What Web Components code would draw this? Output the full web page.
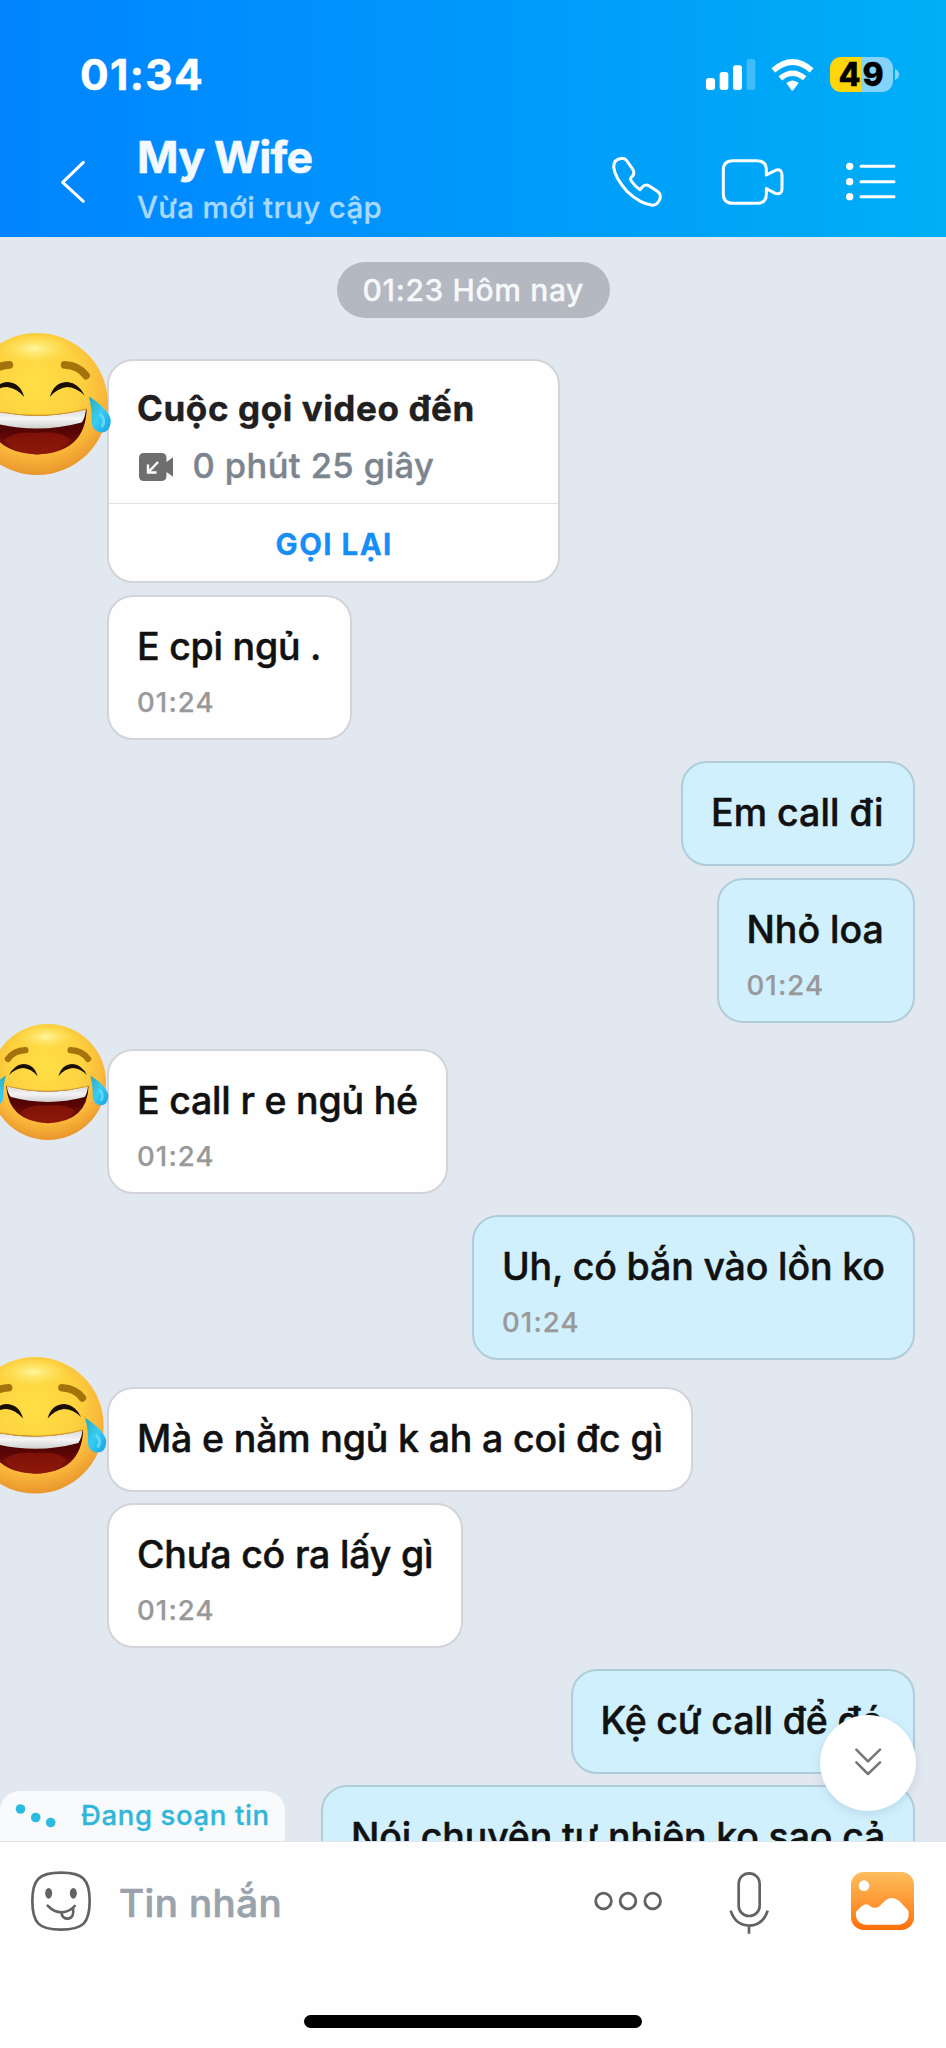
<!DOCTYPE html>
<html lang="vi">
<head>
<meta charset="utf-8">
<title>My Wife</title>
<style>
html,body{margin:0;padding:0}
body{font-family:Inter,"Noto Sans",sans-serif;background:#fff;width:946px;height:2048px;overflow:hidden}
</style>
</head>
<body>
<chat-app></chat-app>
<script>
const define = (name, html, setup) => customElements.define(name, class extends HTMLElement {
  connectedCallback() {
    if (this.shadowRoot) return;
    const t = document.createElement('template');
    t.innerHTML = html;
    this.attachShadow({ mode: 'open' }).append(t.content.cloneNode(true));
    if (setup) setup(this, this.shadowRoot);
  }
});

/* A single line of text whose tracking is set so that its glyphs span `w` pixels. */
const ctx = document.createElement('canvas').getContext('2d');
define('fit-text', `<style>:host{display:block;white-space:nowrap}span{display:inline-block}</style><span><slot></slot></span>`, (host, root) => {
  const cs = getComputedStyle(host), text = host.textContent.trim(), w = +host.getAttribute('w');
  ctx.font = `${cs.fontWeight} ${cs.fontSize} Inter, "Noto Sans", sans-serif`;
  const m = ctx.measureText(text);
  const ls = (w - m.actualBoundingBoxRight - m.actualBoundingBoxLeft) / ([...text].length - 1);
  const s = root.querySelector('span');
  s.style.letterSpacing = ls.toFixed(3) + 'px';
  s.style.marginRight = (-ls).toFixed(3) + 'px';
});

define('status-bar', `<style>
:host{display:flex;height:81px;padding:50px 47.500px 0 80px;color:#fff;align-items:flex-start}
.time{font:700 42.500px/50px Inter,sans-serif;flex:1;-webkit-text-stroke:.5px}
svg{display:block}
.sig{margin:9px 15.5px 0 0}.wifi{margin:9px 15.5px 0 0}
.bat{margin-top:7px;width:63px;height:35px;border-radius:11px;background:linear-gradient(90deg,#ffd60a 31px,#84d3fb 31px);color:#000;display:flex;justify-content:center;font:800 32px/36px Inter,sans-serif;-webkit-text-stroke:.4px}
.nub{margin:19px 0 0 2px}
</style>
<fit-text class="time" w="120">01:34</fit-text>
<svg class="sig" width="50" height="31" viewBox="699 177 150 93" fill="#fff"><rect x="699" y="234" width="27" height="36" rx="8"/><rect x="740" y="216" width="26" height="54" rx="8"/><rect x="780" y="196" width="27" height="74" rx="8"/><rect x="821" y="177" width="26" height="93" rx="8" opacity=".25"/></svg>
<svg class="wifi" width="43" height="32" viewBox="894 176 129 96" fill="none" stroke="#fff"><path d="M901 210Q959 160 1016 210" stroke-width="17"/><path d="M922 234Q959 203 995 234" stroke-width="16"/><path d="M940 248Q959 233 977 248L961 269Q958 272 955 269Z" fill="#fff" stroke="none"/></svg>
<div class="bat"><fit-text w="43">49</fit-text></div>
<svg class="nub" width="4" height="11" viewBox="0 0 4 11"><path d="M0 0Q4 1.500 4 5.500Q4 9.500 0 11Z" fill="#84d3fb"/></svg>`);

define('chat-header', `<style>
:host{display:block;height:237px;background:linear-gradient(90deg,#0084ff 0,#0096fc 45%,#00aff5 100%)}
.row{display:flex;align-items:flex-start;height:106px}
svg{display:block;fill:none;stroke:#fff;stroke-width:9;stroke-linecap:round;stroke-linejoin:round}
.back{margin:28px 0 0 59px}
.who{margin-left:50px;flex:1}
.name{font:700 44.500px/52px Inter,sans-serif;color:#f3f9ff;-webkit-text-stroke:.6px}
.sub{font:500 29.5px/36px Inter,sans-serif;color:#a8d9ff;margin-top:6px;-webkit-text-stroke:.3px}
</style>
<status-bar></status-bar>
<div class="row">
<svg class="back" width="28" height="46" viewBox="177 477 84 138"><path d="M250 487L188 547L250 604"/></svg>
<div class="who"><fit-text class="name" w="172.500">My Wife</fit-text><fit-text class="sub" w="243.500">Vừa mới truy cập</fit-text></div>
<svg style="margin:24px 56px 0 0" width="54" height="54" viewBox="410 463 162 162"><path d="M447 473Q455 473 460 480L479 507Q485 517 478 526Q468 533 474 541Q485 557 500 567L507 559Q516 549 528 556L551 571Q566 581 559 597Q551 614 538 614Q501 610 462 573Q424 530 421 499Q421 475 447 473Z"/></svg>
<svg style="margin:24.500px 57.500px 0 0" width="66" height="52" viewBox="742 466 198 156"><path d="M781 480H852Q881 480 881 508V523L908 509Q928 503 928 523V564Q928 583 908 578L881 564V580Q881 608 852 608H781Q752 608 752 580V508Q752 480 781 480Z"/></svg>
<svg style="margin:28px 48.500px 0 0" width="54" height="46" viewBox="1112 477 162 138"><path d="M1163 499H1262M1163 545H1262M1163 590H1262"/><g fill="#fff" stroke="none"><circle cx="1129" cy="499" r="11"/><circle cx="1129" cy="545" r="11"/><circle cx="1129" cy="590" r="11"/></g></svg>
</div>`);

define('chat-bubble', `<style>
:host{display:block;box-sizing:border-box;border:2px solid #d2d4d9;border-radius:26px;background:#fefefe;color:#111;padding:27px 28px 0;height:105px;align-self:flex-start;margin-left:107px;flex:none}
:host([time]){height:144.500px}
:host([me]){background:#d0f0fd;border-color:#b1ccd9;align-self:flex-end;margin:0 31px 0 0}
::slotted(fit-text){font:500 37.5px/46px Inter,sans-serif;-webkit-text-stroke:.5px}
.time{font:500 27.500px/33px Inter,sans-serif;color:#999;margin-top:15.500px;-webkit-text-stroke:.25px}
</style><slot></slot>`, (host, root) => {
  const t = host.getAttribute('time');
  if (t) {
    const e = document.createElement('fit-text');
    e.className = 'time'; e.setAttribute('w', '74.500'); e.textContent = t;
    root.append(e);
  }
});

define('call-card', `<style>
:host{display:block;box-sizing:border-box;width:453px;height:224px;margin-left:107px;border:2px solid #d2d4d9;border-radius:26px;background:#fefefe;flex:none}
.top{box-sizing:border-box;height:143px;padding:25px 28px 0;border-bottom:1.500px solid #dfe2e5}
.t{font:700 35px/44px Inter,sans-serif;color:#202020;-webkit-text-stroke:.4px}
.d{display:flex;align-items:center;gap:18px;margin-top:14px}
.s{font:500 34.5px/44px Inter,sans-serif;color:#7c858e;-webkit-text-stroke:.4px}
.b{display:flex;justify-content:center;padding-top:21.500px;font:700 29.500px/36px Inter,sans-serif;color:#178ef6;-webkit-text-stroke:.3px}
svg{display:block;margin-left:1.500px;margin-top:1px}
</style>
<div class="top"><fit-text class="t" w="334.500">Cuộc gọi video đến</fit-text>
<div class="d"><svg width="36" height="28" viewBox="0 0 36 28"><path d="M5 0H22Q27.500 0 27.500 5V9L34 4.300V23.700L27.500 19V23Q27.500 28 22 28H5Q0 28 0 23V5Q0 0 5 0Z" fill="#6e6e6e"/><path d="M19 9L9.500 19M9 11.500V19.500H17.500" fill="none" stroke="#fff" stroke-width="2.400"/></svg><fit-text class="s" w="240.500">0 phút 25 giây</fit-text></div></div>
<div class="b"><fit-text w="113.500">GỌI LẠI</fit-text></div>`);

let uid = 0;
define('joy-face', '<style>:host{display:block;position:absolute}svg{display:block;width:100%;height:100%;overflow:visible}</style>', (host, root) => {
  const r = +host.getAttribute('r'), id = 'j' + uid++;
  host.style.cssText += `;left:${host.getAttribute('cx') - r}px;top:${host.getAttribute('cy') - r}px;width:${2*r}px;height:${2*r}px`;
  const half = `<path d="M39-55Q59-54 69-40" fill="none" stroke="#a5730c" stroke-width="11" stroke-linecap="round"/>
  <path d="M18-10Q24-31 43-31Q59-29 67-12Q55-24 42-24Q28-22 18-10Z" fill="#180e04"/>`;
  const tear = `<path d="M73-11Q103 9 104 24Q103 40 91 40Q78 39 77 26Q78 9 73-11Z" fill="url(#${id}t)"/><path d="M90 15Q97 23 92 31" fill="none" stroke="#7be4fb" stroke-width="4" stroke-linecap="round" opacity=".7"/>`;
  const t = document.createElement('template');
  t.innerHTML = `<svg viewBox="-100 -100 200 200"><defs>
  <radialGradient id="${id}f" cx=".48" cy=".36" r=".68"><stop offset="0" stop-color="#ffdf45"/><stop offset=".48" stop-color="#fdd23f"/><stop offset=".74" stop-color="#f9b73a"/><stop offset="1" stop-color="#e58c28"/></radialGradient>
  <radialGradient id="${id}h"><stop offset="0" stop-color="#fff7a0"/><stop offset="1" stop-color="#ffe45a" stop-opacity="0"/></radialGradient>
  <linearGradient id="${id}m" x2="0" y2="1"><stop offset="0" stop-color="#350000"/><stop offset=".55" stop-color="#5c0505"/><stop offset="1" stop-color="#8d1a08"/></linearGradient>
  <linearGradient id="${id}w" x2="0" y2="1"><stop offset="0" stop-color="#d8d8d8"/><stop offset=".5" stop-color="#f4f4f4"/><stop offset="1" stop-color="#cfcfcf"/></linearGradient>
  <linearGradient id="${id}t" x2="1" y2="1"><stop offset="0" stop-color="#2aa8b4"/><stop offset=".5" stop-color="#38cdf3"/><stop offset="1" stop-color="#179fdf"/></linearGradient></defs>
  <circle r="100" fill="url(#${id}f)"/><ellipse cx="-3" cy="-78" rx="52" ry="21" fill="url(#${id}h)"/>
  <path d="M-72 7Q0 25 70 7Q68 69 0 71Q-68 69-72 7Z" fill="url(#${id}m)"/>
  <path d="M-47 52Q-32 37-2 41Q32 36 47 51Q28 70 0 71Q-30 69-47 52Z" fill="#8f180a" opacity=".7"/>
  <path d="M-71 7Q0 26 69 7Q68 19 63 26Q0 43-64 26Q-70 19-71 7Z" fill="url(#${id}w)"/>
  <path d="M-72 7Q0 25 70 7" fill="none" stroke="#d79a22" stroke-width="1.500"/>
  ${half}<g transform="scale(-1,1)">${half}${tear}</g>${tear}</svg>`;
  root.append(t.content);
});

define('scroll-down', `<style>
:host{position:absolute;left:820px;top:1478px;width:96px;height:96px;border-radius:50%;background:#fff;box-shadow:0 3px 10px rgba(60,90,120,.15);display:flex;align-items:center;justify-content:center}
svg{fill:none;stroke:#767676;stroke-width:7.500;stroke-linecap:round;stroke-linejoin:round}
</style><svg width="30" height="32" viewBox="1140 350 90 96"><path d="M1150 358L1185 393L1221 358M1150 396L1185 431L1221 396"/></svg>`);

define('typing-tag', `<style>
:host{position:absolute;left:0;top:1554px;width:285px;height:50px;border-radius:20px 20px 0 0;background:#f8fafc;display:flex;color:#31b6da}
svg{display:block}fit-text{font:500 27.5px/34px Inter,sans-serif;margin:7px 0 0 21px;-webkit-text-stroke:.3px}
</style><svg width="60" height="50" fill="#2cbbe0"><circle cx="20.500" cy="18" r="4.800"/><circle cx="35.700" cy="26.500" r="4.800"/><circle cx="50.700" cy="31.500" r="4.800"/></svg><fit-text w="186.500">Đang soạn tin</fit-text>`);

define('chat-thread', `<style>
:host{display:flex;flex-direction:column;position:relative;height:1604px;overflow:hidden;background:#e2e8f0}
.pill{align-self:center;box-sizing:border-box;width:273px;height:56px;margin:25px 0 41px;border-radius:28px;background:#b4b9c1;color:#f6f8fa;font:500 30px/56px Inter,sans-serif;display:flex;justify-content:center;flex:none;-webkit-text-stroke:.3px}
.g12{margin-top:12px!important}.g22{margin-top:21.500px!important}.g27{margin-top:27px!important}
</style>
<div class="pill"><fit-text w="219.500">01:23 Hôm nay</fit-text></div>
<call-card></call-card>
<chat-bubble class="g12" time="01:24" style="width:245px"><fit-text w="179">E cpi ngủ .</fit-text></chat-bubble>
<chat-bubble me class="g22" style="width:234px"><fit-text w="168">Em call đi</fit-text></chat-bubble>
<chat-bubble me class="g12" time="01:24" style="width:198.500px"><fit-text w="132">Nhỏ loa</fit-text></chat-bubble>
<chat-bubble time="01:24" style="width:341px;margin-top:26.500px"><fit-text w="277">E call r e ngủ hé</fit-text></chat-bubble>
<chat-bubble me class="g22" time="01:24" style="width:443px"><fit-text w="378.500">Uh, có bắn vào lồn ko</fit-text></chat-bubble>
<chat-bubble style="width:585.500px;height:104.500px;margin-top:27.500px"><fit-text w="520.500">Mà e nằm ngủ k ah a coi đc gì</fit-text></chat-bubble>
<chat-bubble time="01:24" style="width:356px;margin-top:11.500px"><fit-text w="292">Chưa có ra lấy gì</fit-text></chat-bubble>
<chat-bubble me class="g22" style="width:344.500px"><fit-text w="278">Kệ cứ call để đó</fit-text></chat-bubble>
<chat-bubble me class="g12" style="width:594px;margin-top:11px!important"><fit-text w="529">Nói chuyện tự nhiên ko sao cả</fit-text></chat-bubble>
<joy-face cx="37" cy="166.500" r="71"></joy-face>
<joy-face cx="48" cy="845" r="58"></joy-face>
<joy-face cx="35" cy="1188.300" r="68.300"></joy-face>
<typing-tag></typing-tag>
<scroll-down></scroll-down>`);

define('chat-composer', `<style>
:host{display:flex;flex-direction:column;box-sizing:border-box;height:207px;border-top:1px solid #e0e3e7;background:#fefefe}
.row{display:flex;height:173px;align-items:flex-start;flex:none}
.ph{font:500 38.5px/46px Inter,sans-serif;color:#9aa2ab;margin:38px 0 0 26.500px;flex:1;-webkit-text-stroke:.7px}
svg{display:block;fill:none;stroke:#626262;stroke-width:8;stroke-linecap:round;stroke-linejoin:round}
.home{width:338px;height:12.500px;border-radius:7px;background:#000;align-self:center}
</style>
<div class="row">
<svg style="margin:27px 0 0 28.500px" width="64" height="64" viewBox="86 326 192 192"><path d="M182 337C248 337 268 357 268 422C268 488 248 508 182 508C116 508 96 488 96 422C96 357 116 337 182 337Z"/><g fill="#626262" stroke="none"><ellipse cx="145" cy="399" rx="10.500" ry="16"/><ellipse cx="219" cy="399" rx="10.500" ry="16"/></g><path d="M142 436Q160 456 185 456Q210 453 223 437M183 457Q186 475 203 475Q223 472 218 443"/></svg>
<fit-text class="ph" w="159.500">Tin nhắn</fit-text>
<svg style="margin:48px 65px 0 0" width="70" height="22" viewBox="360 779 210 66"><g stroke-width="8.500"><circle cx="391.500" cy="812" r="23.500"/><circle cx="465" cy="812" r="23.500"/><circle cx="539" cy="812" r="23.500"/></g></svg>
<svg style="margin:29px 81px 0 0" width="42" height="64" viewBox="765 723 126 192" ><rect x="797" y="730" width="63" height="128" rx="31"/><path d="M773 842Q787 886 829 887Q870 886 884 842M828 888V911" stroke-linecap="butt"/></svg>
<svg style="margin:30px 32px 0 0" width="63" height="58" viewBox="1134 726 189 174" ><defs><linearGradient id="o" x2="0" y2="1"><stop offset="0" stop-color="#fdbd5d"/><stop offset=".5" stop-color="#fd9a35"/><stop offset="1" stop-color="#fd6f09"/></linearGradient></defs><rect x="1134" y="726" width="189" height="174" rx="38" fill="url(#o)" stroke="none"/><circle cx="1173" cy="767" r="16" fill="#fff" stroke="none"/><path d="M1151 843L1167 828Q1178 818 1190 827Q1204 839 1219 829L1238 811Q1257 797 1278 812L1305 841Q1310 852 1304 868Q1297 883 1278 884H1178Q1157 883 1151 865Q1146 852 1151 843Z" fill="#fff" stroke="none"/></svg>
</div>
<div class="home"></div>`);

define('chat-app', `<style>:host{display:flex;flex-direction:column;width:946px;height:2048px}</style><chat-header></chat-header><chat-thread></chat-thread><chat-composer></chat-composer>`);
</script>
</body>
</html>
